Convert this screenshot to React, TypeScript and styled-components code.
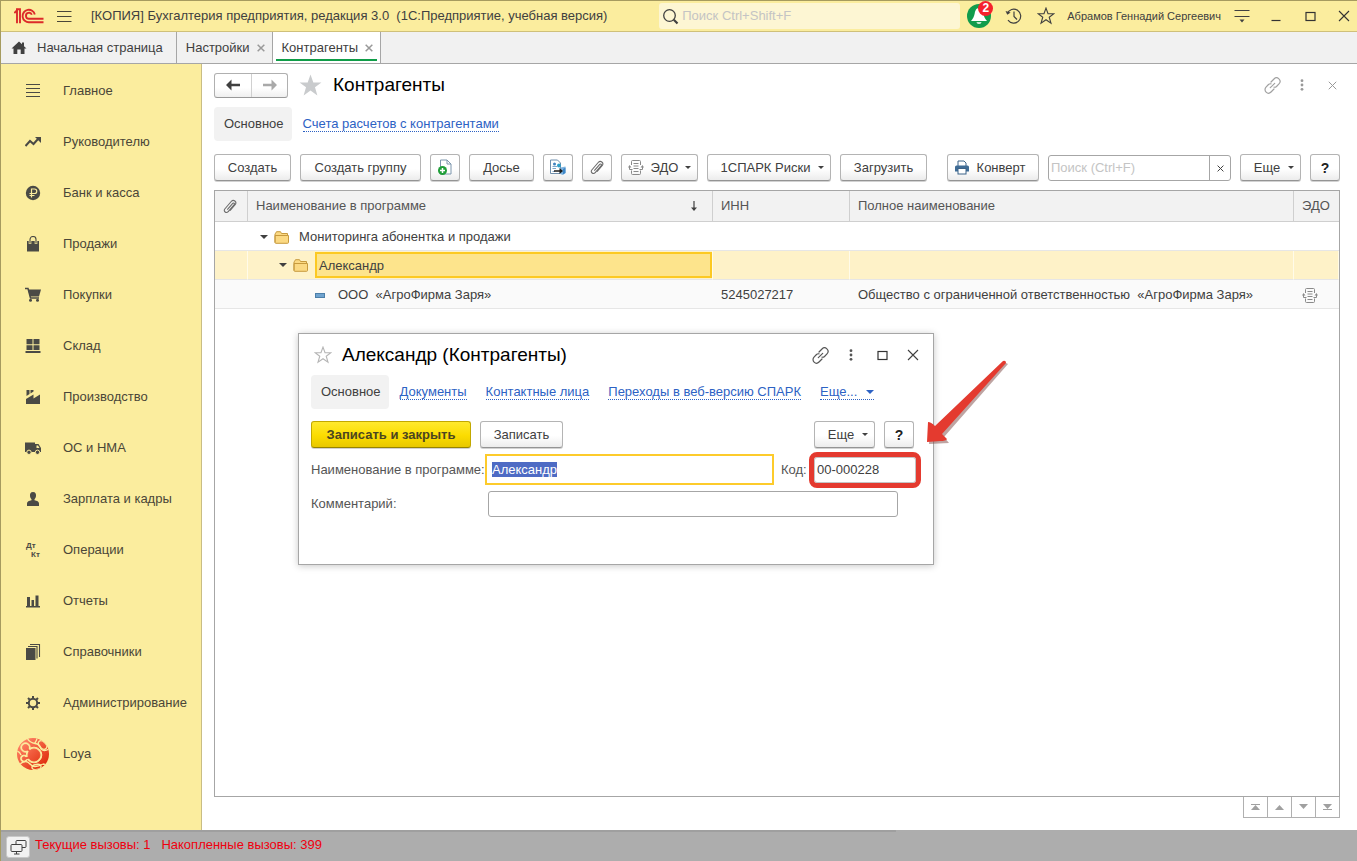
import React, { useEffect, useRef } from 'react';
import styled, { createGlobalStyle, css } from 'styled-components';

const Global = createGlobalStyle`
  *, *::before, *::after { box-sizing: border-box; }
  body { margin: 0; background: #fff; }
  body, button, input { font-family: "Liberation Sans", Arial, sans-serif; font-size: 13px; line-height: 16px; color: #404040; }
  button { padding: 0; margin: 0; border: 0; background: none; cursor: pointer; }
  input { margin: 0; }
  svg { display: block; flex: none; }
  h1, h2 { margin: 0; font-weight: 400; color: #000; }
`;

const Page = styled.div`
  position: relative;
  display: flex;
  flex-direction: column;
  min-height: 100vh;
  border-left: 1px solid #a69b5f;
`;

/* ---------- title bar ---------- */
const TitleBar = styled.header`
  display: flex;
  align-items: center;
  height: 32px;
  padding: 0 0 0 13px;
  background: #fbed9e;
  border-top: 1px solid #a69b5f;
  border-bottom: 1px solid #cfc07a;
`;
const MenuButton = styled.button`
  margin: 0 19px 0 13px;
`;
const WindowTitle = styled.div`
  flex: 1;
  white-space: pre;
`;
const GlobalSearch = styled.label`
  display: flex;
  align-items: center;
  gap: 3px;
  width: 301px;
  height: 26px;
  padding-left: 3px;
  background: #fdf6d3;
  border-radius: 3px;
`;
const PlainInput = styled.input`
  flex: 1;
  min-width: 0;
  border: 0;
  padding: 0;
  outline: 0;
  background: transparent;
  &::placeholder { color: #c4c4c4; opacity: 1; }
`;
const TitleIcons = styled.div`
  display: flex;
  align-items: center;
  gap: 14px;
  margin: 0 12px 0 7px;
`;
const UserName = styled.button`
  font-size: 11px;
`;
const WindowControls = styled.div`
  display: flex;
  align-items: center;
  gap: 8px;
  margin-left: 8px;
  button { display: flex; justify-content: center; width: 26px; }
`;
const BellWrap = styled.button`
  position: relative;
`;
const Badge = styled.span`
  position: absolute;
  top: -3px;
  right: -2px;
  width: 15px;
  height: 15px;
  border-radius: 50%;
  background: #f5222d;
  color: #fff;
  font-size: 12px;
  line-height: 15px;
  font-weight: 700;
`;

/* ---------- tabs ---------- */
const Tabs = styled.nav`
  display: flex;
  height: 32px;
  background: #f1f1f1;
  border-bottom: 1px solid #a6a6a6;
`;
const Tab = styled.button<{ $active?: boolean }>`
  position: relative;
  display: flex;
  align-items: center;
  gap: 7px;
  padding: 0 7px 0 9px;
  border-right: 1px solid #a6a6a6;
  ${p => p.$active && css`
    background: #fff;
    &::after {
      content: "";
      position: absolute;
      left: 3px;
      right: 3px;
      bottom: 2px;
      height: 2px;
      background: #0f9d48;
    }
  `}
`;
const HomeTab = styled(Tab)`
  gap: 10px;
  padding: 0 13px 0 10px;
`;

/* ---------- body ---------- */
const Body = styled.div`
  display: flex;
  flex: 1;
`;
const Sidebar = styled.nav`
  width: 201px;
  padding-top: 1px;
  background: #fbed9e;
  border-right: 1px solid #c9bd84;
`;
const SideItem = styled.a`
  display: grid;
  grid-template-columns: 34px 1fr;
  align-items: center;
  gap: 13px;
  height: 51px;
  padding-left: 15px;
  color: #4a4638;
  text-decoration: none;
`;
const SideIcon = styled.span`
  display: flex;
  justify-content: center;
`;
const Main = styled.main`
  display: flex;
  flex-direction: column;
  flex: 1;
  min-width: 0;
  padding: 8px 17px 12px 12px;
`;
const Heading = styled.div`
  display: flex;
  align-items: center;
  height: 26px;
  gap: 10px;
  h1 { font-size: 19px; line-height: 24px; flex: 1; }
`;
const NavPair = styled.div`
  display: flex;
  height: 25px;
  border: 1px solid #b0b0b0;
  border-bottom-color: #999;
  border-radius: 3px;
  background: linear-gradient(#fff 60%, #efefef);
  button { width: 36px; display: flex; align-items: center; justify-content: center; }
  button + button { border-left: 1px solid #d0d0d0; }
`;
const HeadActions = styled.div<{ $gap: number }>`
  display: flex;
  align-items: center;
  gap: ${p => p.$gap}px;
  button { display: flex; justify-content: center; width: 16px; }
`;
const SectionNav = styled.div`
  display: flex;
  align-items: center;
`;
const CurrentSection = styled.span`
  display: flex;
  align-items: center;
  height: 34px;
  padding: 0 8px 0 10px;
  border-radius: 4px;
  background: #f2f2f2;
`;
const DottedLink = styled.a`
  display: flex;
  align-items: center;
  gap: 9px;
  height: 15px;
  line-height: 16px;
  color: #2d62c4;
  text-decoration: none;
  border-bottom: 1px dotted #2d62c4;
  white-space: nowrap;
`;
const MainSections = styled(SectionNav)`
  gap: 11px;
  margin: 9px 0 13px;
`;

const Btn = styled.button<{ $w: number }>`
  display: flex;
  align-items: center;
  justify-content: center;
  gap: 7px;
  flex: none;
  width: ${p => p.$w}px;
  height: 27px;
  border: 1px solid #b4b4b4;
  border-bottom-color: #949494;
  border-radius: 3px;
  background: linear-gradient(#fff 55%, #ececec);
  box-shadow: 0 1px 0 #d2d2d2;
  white-space: nowrap;
`;
const MenuBtn = styled(Btn)`
  gap: 8px;
  padding-left: 7px;
`;
const IconTextBtn = styled(Btn)`
  padding-right: 7px;
`;
const PrimaryBtn = styled(Btn)`
  background: linear-gradient(#ffe92e, #fbdc00 55%, #e8c800);
  border-color: #c2a800;
  border-bottom-color: #978400;
  font-weight: 700;
  color: #4b4520;
`;
const HelpBtn = styled(Btn)`
  font-weight: 700;
  font-size: 14px;
  color: #222;
`;
const Toolbar = styled.div`
  display: flex;
  gap: 9px;
`;
const Spacer = styled.div`
  flex: 0 0 2px;
`;
const ListSearch = styled.div`
  display: flex;
  flex: 1;
  height: 26px;
  min-width: 120px;
  margin-top: 1px;
  padding-left: 2px;
  border: 1px solid #a6a6a6;
  border-radius: 3px;
  background: #fff;
  button { width: 21px; border-left: 1px solid #a6a6a6; display: flex; align-items: center; justify-content: center; }
`;

/* ---------- list ---------- */
const ListPane = styled.section`
  flex: 1;
  margin-top: 9px;
  border: 1px solid #a6a6a6;
`;
const List = styled.table`
  width: 100%;
  table-layout: fixed;
  border-collapse: separate;
  border-spacing: 0;
`;
const Th = styled.th`
  height: 31px;
  padding: 0 8px;
  background: #f2f2f2;
  border-bottom: 1px solid #cfcfcf;
  border-right: 1px solid #cfcfcf;
  font-weight: 400;
  text-align: left;
  color: #555;
  white-space: nowrap;
  &:last-child { border-right: 0; }
`;
const SortHead = styled.span`
  display: flex;
  align-items: center;
  justify-content: space-between;
  padding-right: 6px;
`;
const Row = styled.tr<{ $kind?: 'selected' | 'alt' }>`
  background: ${p => (p.$kind === 'selected' ? '#fef2c8' : p.$kind === 'alt' ? '#fafafa' : '#fff')};
  td { border-right: ${p => (p.$kind === 'selected' ? '1px solid #fffbe9' : '0')}; }
`;
const Td = styled.td`
  height: 29px;
  padding: 2px 8px 0;
  border-bottom: 1px solid #e6e6e6;
  white-space: pre;
`;
const TreeCell = styled.div<{ $indent: number }>`
  display: flex;
  align-items: center;
  gap: 6px;
  padding-left: ${p => p.$indent}px;
`;
const TreeLabel = styled.span<{ $left: number }>`
  padding-left: ${p => p.$left}px;
`;
const TightTd = styled(Td)`
  padding: 0 0 0 8px;
`;
const ActiveCell = styled.span`
  flex: 1;
  height: 26px;
  padding-left: 2px;
  line-height: 23px;
  border: 2px solid #fcc922;
  background: #fde48c;
`;
const Pager = styled.div`
  display: flex;
  align-self: flex-end;
  border: 1px solid #b0b0b0;
  border-top: 0;
  button { width: 24px; height: 20px; display: flex; align-items: center; justify-content: center; }
  button + button { border-left: 1px solid #b0b0b0; }
  button:first-child { width: 23px; }
`;

/* ---------- status ---------- */
const StatusBar = styled.footer`
  display: flex;
  gap: 5px;
  height: 31px;
  padding: 6px 5px 0;
  background: linear-gradient(#9f9f9f, #9f9f9f) 0 0 / 66% 2px no-repeat #adadad;
  color: #f0000f;
  white-space: pre;
  line-height: 18px;
`;
const WindowsBtn = styled.button`
  display: flex;
  align-items: center;
  justify-content: center;
  width: 24px;
  height: 22px;
  border: 1px solid #c8c8c8;
  border-radius: 3px;
  background: #f2f2f2;
`;

/* ---------- dialog ---------- */
const Dialog = styled.section`
  position: absolute;
  left: 297px;
  top: 333px;
  width: 636px;
  height: 232px;
  padding: 8px 12px;
  border: 1px solid #a6a6a6;
  background: #fff;
  box-shadow: 0 1px 7px rgba(0, 0, 0, 0.22);
`;
const DialogHead = styled.div`
  display: flex;
  align-items: center;
  gap: 10px;
  height: 26px;
  padding-left: 3px;
  h2 { flex: 1; font-size: 19px; line-height: 24px; }
`;
const DialogSections = styled(SectionNav)`
  gap: 19px;
  margin: 7px 0 12px;
  ${CurrentSection} { margin-right: -8px; }
`;
const Commands = styled.div`
  display: flex;
  gap: 9px;
  padding-right: 7px;
`;
const Grow = styled.div`
  flex: 1;
`;
const Fields = styled.div`
  display: grid;
  grid-template-columns: 171px 1fr;
  align-items: center;
  row-gap: 6px;
  margin-top: 6px;
  label { color: #555; white-space: nowrap; }
`;
const FieldLine = styled.div`
  display: flex;
  align-items: center;
`;
const NameInput = styled.input`
  width: 289px;
  height: 31px;
  margin-left: 3px;
  margin-right: 7px;
  padding: 0 5px;
  border: 2px solid #fdcb2b;
  outline: 0;
  &::selection { background: #4e6bc4; color: #fff; }
`;
const CodeInput = styled.input`
  width: 102px;
  height: 26px;
  padding: 0 2px;
  border: 1px solid #c4c4c4;
  border-radius: 3px;
  outline: 5px solid #e43a2f;
`;
const CodeLabel = styled.label`
  width: 33px;
`;
const CommentInput = styled.input`
  width: 410px;
  height: 26px;
  margin-left: 6px;
  border: 1px solid #a6a6a6;
  border-radius: 3px;
`;
const Pointer = styled.svg`
  position: absolute;
  left: 919px;
  top: 353px;
  pointer-events: none;
`;

/* ---------- drawings ---------- */
const Logo = () => (
  <svg width="30" height="16" viewBox="0 0 30 16" fill="none" stroke="#dc2a2a" strokeWidth="1.9">
    <path d="M.3 5 L3 2.300 V15.200 M2 1.200 H6 V15.200" />
    <path d="M20.800 6.500 A6.200 6.200 0 1 0 15.200 14.200 H29.500" />
    <path d="M17.800 6.800 A3 3 0 1 0 15.200 10.800 H29.500" />
  </svg>
);
const Burger = () => (
  <svg width="15" height="13" viewBox="0 0 15 13" stroke="#4a4638" strokeWidth="1.2"><path d="M0 1.500H14.500M0 6.500H14.500M0 11.500H14.500" /></svg>
);
const Magnifier = () => (
  <svg width="17" height="17" viewBox="0 0 17 17" fill="none" stroke="#404040"><circle cx="7.5" cy="7.5" r="5.800" strokeWidth="1.300" /><path d="M11.800 11.800L15.500 15.500" strokeWidth="2.200" /></svg>
);
const Bell = () => (
  <svg width="24" height="24" viewBox="0 0 24 24"><circle cx="12" cy="12" r="12" fill="#119c4c" /><path d="M12 4c-3 0-3.800 3-4.300 5.500C7.200 12.500 6 14.500 4 17h16c-2-2.500-3.200-4.500-3.700-7.500C15.800 7 15 4 12 4zM9.500 18.300h5c-.500 2-4.500 2-5 0z" fill="#fff" /></svg>
);
const HistoryIcon = () => (
  <svg width="18" height="18" viewBox="0 0 18 18" fill="none" stroke="#404040" strokeWidth="1.200"><path d="M2.200 6.500A7 7 0 1 1 3 13.200M9 4.500V9.500L12 12.500" /><path d="M.5 4L2.400 7.800L5.600 5.500z" fill="#404040" stroke="none" /></svg>
);
const Star = ({ size, fill = 'none', stroke = 'none' }: { size: number; fill?: string; stroke?: string }) => (
  <svg width={size} height={size} viewBox="0 0 24 24" fill={fill} stroke={stroke} strokeWidth="1.500"><path d="M12 1.500L14.700 9H22.500L16.300 13.700L18.600 21.500L12 16.900L5.400 21.500L7.700 13.700L1.500 9H9.300z" /></svg>
);
const Options = () => (
  <svg width="16" height="14" viewBox="0 0 16 14"><path d="M.5 1.500H15.500M.5 7.500H15.500" stroke="#404040" strokeWidth="1.100" /><path d="M5.500 10.500H10.500L8 13.500z" fill="#404040" /></svg>
);
const Minimize = () => <svg width="10" height="12" viewBox="0 0 10 12"><path d="M.5 10.500H9.500" stroke="#333" strokeWidth="1.200" /></svg>;
const Maximize = () => <svg width="11" height="11" viewBox="0 0 11 11"><rect x="1" y="1.500" width="9" height="8" fill="none" stroke="#333" strokeWidth="1.200" /></svg>;
const Cross = ({ size, color, width = 1.1 }: { size: number; color: string; width?: number }) => (
  <svg width={size} height={size} viewBox="0 0 12 12"><path d="M1 1L11 11M11 1L1 11" stroke={color} strokeWidth={width * 12 / size} /></svg>
);
const Home = () => (
  <svg width="16" height="14" viewBox="0 0 16 14" fill="#404040"><path d="M8 .5L.5 7.500H2.500V13H6.300V8.500H9.700V13H13.500V7.500H15.500L13 5.200V1.500H11V3.300z" /></svg>
);
const Arrow = ({ flip, color }: { flip?: boolean; color: string }) => (
  <svg width="16" height="12" viewBox="0 0 16 12"><path d={flip ? 'M15 6L9.500 .5V4.700H1V7.300H9.500V11.500z' : 'M1 6L6.500 .5V4.700H15V7.300H6.500V11.500z'} fill={color} /></svg>
);
const LinkIcon = ({ color }: { color: string }) => (
  <svg width="17" height="17" viewBox="0 0 17 17" fill="none" stroke={color} strokeWidth="1.200" strokeLinecap="round">
    <path d="M7 5L10 2A3.200 3.200 0 0 1 15 6.800L12.500 9.500Q11.500 10.500 10 10.200" />
    <path d="M10 12L7 15A3.200 3.200 0 0 1 2 10.200L4.500 7.500Q5.500 6.500 7 6.800" />
    <path d="M6.300 10.700L10.700 6.300" />
  </svg>
);
const Dots = ({ color }: { color: string }) => (
  <svg width="4" height="12" viewBox="0 0 4 12" fill={color}><circle cx="2" cy="1.700" r="1.400" /><circle cx="2" cy="6" r="1.400" /><circle cx="2" cy="10.300" r="1.400" /></svg>
);
const Caret = ({ color = '#404040', size = 6 }: { color?: string; size?: number }) => (
  <svg width={size} height={size / 2} viewBox="0 0 8 4"><path d="M0 0H8L4 4z" fill={color} /></svg>
);
const Clip = () => (
  <svg width="14" height="15" viewBox="0 0 14 15" fill="none" stroke="#6c6c6c" strokeWidth="1.100"><path d="M4.300 10.600L9.500 4.600C10.800 3.200 12 4.600 11 5.900L5.200 12.600C3.300 14.700 0 12.400 1.800 10L8.200 2.500C10.500 0 14.200 2.600 12.300 5.400L7 11.600" /></svg>
);
const Folder = () => (
  <svg width="16" height="13" viewBox="0 0 16 13" fill="#fbd983" stroke="#c79a3e"><path d="M1 11.500V3Q1 2.500 1.500 2.500L2.500 .7H6.500L7.500 2.500H13.500V4.500M1 4.500H14.500V11.500Q14.500 12.300 13.500 12.300H2Q1 12.300 1 11.500V4.500z" /></svg>
);
const DocAdd = () => (
  <svg width="16" height="17" viewBox="0 0 16 17"><path d="M3.500 1H10L14 5V15H3.500z" fill="#fff" stroke="#7d96ad" /><path d="M10 1V5H14" fill="none" stroke="#7d96ad" /><circle cx="5.500" cy="11.500" r="4.500" fill="#1f9e38" /><path d="M5.500 9V14M3 11.500H8" stroke="#fff" strokeWidth="1.500" /></svg>
);
const DocSend = () => (
  <svg width="18" height="17" viewBox="0 0 18 17"><path d="M1.500 1H8.500L11.500 4V14.500H1.500z" fill="#fff" stroke="#6f8fac" /><path d="M3.500 7.500H8M3.500 9.500H7M3.500 12.500H6" stroke="#7da7cb" /><circle cx="5.500" cy="5" r="1.500" fill="#3f82bf" /><circle cx="10" cy="6.500" r="2" fill="#2f9fc9" /><path d="M11.500 8.500L16.500 7.500V14L13.500 16L10.500 14.500z" fill="#7fb4e0" /><path d="M14 10L16.500 8.500V14L14 15.500z" fill="#3d87c9" /><path d="M5 11.300H10.500V9L14 12L10.500 15V12.700H5z" fill="#1c1c1c" /></svg>
);
const EdoIcon = () => (
  <svg width="16" height="15" viewBox="0 0 16 15" fill="none" stroke="#8a8a8a"><path d="M3.500 5V1.500Q3.500 .5 4.500 .5H11.500Q12.500 .5 12.500 1.500V5M3.500 10.500V13.500Q3.500 14.500 4.500 14.500H11.500Q12.500 14.500 12.500 13.500V10.500M5.500 3.500H10.500M5.500 6H10.500M5.500 8.500H10.500M5.500 11.500H10.500" /><path d="M4.500 9.500H1.500V6.500M11.500 9.500H14.500V6.500" /><path d="M0 7.500L1.500 5L3.500 7.500zM12.500 7.500L14.500 5L16 7.500z" fill="#8a8a8a" stroke="none" /></svg>
);
const Printer = () => (
  <svg width="16" height="15" viewBox="0 0 16 15"><path d="M4 6V1H10L12 3V6" fill="#fff" stroke="#3a6288" /><path d="M1 7Q1 5.500 2.500 5.500H13.500Q15 5.500 15 7V11.500H1z" fill="#3f6c96" /><rect x="4" y="8.500" width="8" height="5.500" fill="#fff" stroke="#3a6288" /></svg>
);
const SortArrow = () => (
  <svg width="8" height="12" viewBox="0 0 8 12"><path d="M4 1V10" stroke="#404040" strokeWidth="1.200" /><path d="M1 7.500H7L4 11z" fill="#404040" /></svg>
);
const ItemMark = () => (
  <svg width="10" height="5" viewBox="0 0 10 5"><rect x=".5" y=".5" width="9" height="4" fill="#6fa3cf" stroke="#4c7fa9" /></svg>
);
const PagerIcon = ({ up, end }: { up?: boolean; end?: boolean }) => (
  <svg width="11" height="8" viewBox="0 0 11 8"><path d={up ? 'M1 7L5.500 2L10 7z' : 'M1 1L5.500 6L10 1z'} fill="#a0a0a0" />{end && <path d={up ? 'M1 1.500H10' : 'M1 6.500H10'} stroke="#a0a0a0" />}</svg>
);
const Screens = () => (
  <svg width="17" height="16" viewBox="0 0 17 16" fill="#f2f2f2" stroke="#404040"><rect x="6" y="1.500" width="10" height="7" rx="1" /><rect x="1" y="5.500" width="11" height="7" rx="1" /><path d="M6.500 12.500V15M4 15H9.500" /></svg>
);

const K = '#4a4a45';
const PAPER = '#fbed9e';
const sideIcons: Record<string, React.ReactNode> = {
  main: <path d="M1 1.500H15M1 5.500H15M1 9.500H15M1 13.500H15" stroke={K} />,
  chart: <><path d="M.5 12L5 7L8.500 10L13 5" fill="none" stroke={K} strokeWidth="2" /><path d="M10 3H16V9z" fill={K} /></>,
  ruble: <><circle cx="8" cy="8" r="7.200" fill={K} /><path d="M6.500 12.500V4H9.500A2.200 2.200 0 0 1 9.500 8.500H4.500M4.500 10.500H9.500" fill="none" stroke={PAPER} strokeWidth="1.200" /></>,
  bag: <><path d="M2 5H14V15.500H2z" fill={K} /><path d="M5 8V3.500A2.500 2.500 0 0 1 11 3.500V8" fill="none" stroke={PAPER} strokeWidth="2.600" /><path d="M5 7.500V3.500A2.500 2.500 0 0 1 11 3.500V7.500" fill="none" stroke={K} strokeWidth="1.100" /></>,
  cart: <><path d="M0 1.500H3L5.500 11H14" fill="none" stroke={K} strokeWidth="1.500" /><path d="M3 2.500H16L14 9.500H5z" fill={K} /><circle cx="5.500" cy="13.300" r="1.500" fill={K} /><circle cx="12.500" cy="13.300" r="1.500" fill={K} /></>,
  store: <path d="M1.500 1H7.500V6.300H1.500zM8.500 1H14.500V6.300H8.500zM1.500 7.300H7.500V12H1.500zM8.500 7.300H14.500V12H8.500zM.5 13H15.500V15H.5z" fill={K} />,
  factory: <path d="M1 15V10L8.500 5.500V9.500L15 5.500V15zM1.500 1H4.500V5L1.500 7zM5.500 1H8.500V2.500L5.500 4.500z" fill={K} />,
  truck: <><path d="M0 2.500H10V4H13.500L16 8V12H0z" fill={K} /><path d="M11.500 5.500H13L14.500 8H11.500z" fill={PAPER} /><circle cx="4" cy="12.300" r="2.200" fill={K} stroke={PAPER} /><circle cx="12.500" cy="12.300" r="2.200" fill={K} stroke={PAPER} /></>,
  person: <path d="M8 1C10.500 1 11.200 3 11 5C10.800 6.800 10 7.500 9.500 8.300V9.300C12 10 14 10.500 14 12.500V15H2V12.500C2 10.500 4 10 6.500 9.300V8.300C6 7.500 5.200 6.800 5 5C4.800 3 5.500 1 8 1z" fill={K} />,
  ops: <g fill={K} fontFamily="Liberation Sans, Arial, sans-serif" fontWeight="700" fontSize="8"><text x="1" y="6">Дт</text><text x="6" y="15">Кт</text></g>,
  bars: <path d="M1 13H15V14.500H1zM2 4H5V13H2zM6.500 7H9V13H6.500zM10.500 2.500H13.500V13H10.500z" fill={K} />,
  books: <><path d="M1 4H10.500V16H1z" fill={K} /><path d="M3 2.500H12V14.500M5 .5H14.500V13" fill="none" stroke={K} strokeWidth="1.100" /></>,
  gear: <><circle cx="8" cy="8" r="4.200" fill="none" stroke={K} strokeWidth="2" /><path d="M8 1V3.500M8 12.500V15M1 8H3.500M12.500 8H15M3 3L4.800 4.800M11.200 11.200L13 13M13 3L11.200 4.800M3 13L4.800 11.200" stroke={K} strokeWidth="2" /></>,
};
const SideGlyph = ({ name }: { name: string }) => <svg width="16" height="16" viewBox="0 0 16 16">{sideIcons[name]}</svg>;
const LoyaLogo = () => (
  <svg width="32" height="32" viewBox="0 0 32 32">
    <defs>
      <linearGradient id="loya" gradientUnits="userSpaceOnUse" x1="4" y1="4" x2="27" y2="28"><stop offset="0" stopColor="#ff8265" /><stop offset="1" stopColor="#e02f0e" /></linearGradient>
      <clipPath id="ball"><circle cx="16" cy="16" r="16" /></clipPath>
    </defs>
    <g clipPath="url(#ball)">
      <rect width="32" height="32" fill="url(#loya)" />
      <g fill="none" stroke={PAPER} strokeWidth="1.400">
        <path d="M10 0Q13 5 18 5.500T24 11Q27 14 32 11M0 13Q3 14 4 17M3 26Q9 21 13 26T26 26M26 26Q29 26 30 29M18 5Q20 2 20 0" />
        <ellipse cx="25.500" cy="7" rx="3.300" ry="5" transform="rotate(-45 25.500 7)" />
        <ellipse cx="19.500" cy="29" rx="4.500" ry="2.600" transform="rotate(-10 19.500 29)" />
      </g>
      <g fill={PAPER} stroke={PAPER}>
        <circle cx="17" cy="17" r="7.800" /><circle cx="8.500" cy="9.500" r="4.700" /><circle cx="7" cy="20.500" r="3.400" />
      </g>
      <g fill="url(#loya)" stroke="url(#loya)">
        <circle cx="17" cy="17" r="6" /><circle cx="8.500" cy="9.500" r="3" /><circle cx="7" cy="20.500" r="1.700" />
        <path d="M9 10L15 15M8 20.500L14 19" strokeWidth="2" />
      </g>
    </g>
  </svg>
);

const sections: [string, string][] = [
  ['main', 'Главное'], ['chart', 'Руководителю'], ['ruble', 'Банк и касса'], ['bag', 'Продажи'],
  ['cart', 'Покупки'], ['store', 'Склад'], ['factory', 'Производство'], ['truck', 'ОС и НМА'],
  ['person', 'Зарплата и кадры'], ['ops', 'Операции'], ['bars', 'Отчеты'], ['books', 'Справочники'],
  ['gear', 'Администрирование'],
];

export default function App() {
  const nameRef = useRef<HTMLInputElement>(null);
  useEffect(() => {
    nameRef.current?.focus();
    nameRef.current?.select();
  }, []);

  return (
    <Page>
      <Global />
      <TitleBar>
        <Logo />
        <MenuButton aria-label="Меню"><Burger /></MenuButton>
        <WindowTitle>[КОПИЯ] Бухгалтерия предприятия, редакция 3.0  (1С:Предприятие, учебная версия)</WindowTitle>
        <GlobalSearch>
          <Magnifier />
          <PlainInput aria-label="Поиск" placeholder="Поиск Ctrl+Shift+F" />
        </GlobalSearch>
        <TitleIcons>
          <BellWrap aria-label="Уведомления"><Bell /><Badge>2</Badge></BellWrap>
          <button aria-label="История"><HistoryIcon /></button>
          <button aria-label="Избранное"><Star size={18} stroke="#404040" /></button>
        </TitleIcons>
        <UserName>Абрамов Геннадий Сергеевич</UserName>
        <WindowControls>
          <button aria-label="Настройки"><Options /></button>
          <button aria-label="Свернуть"><Minimize /></button>
          <button aria-label="Развернуть"><Maximize /></button>
          <button aria-label="Закрыть"><Cross size={12} color="#333" /></button>
        </WindowControls>
      </TitleBar>

      <Tabs>
        <HomeTab><Home />Начальная страница</HomeTab>
        <Tab>Настройки<Cross size={8} color="#999" width={1.5} /></Tab>
        <Tab $active>Контрагенты<Cross size={8} color="#999" width={1.5} /></Tab>
      </Tabs>

      <Body>
        <Sidebar>
          {sections.map(([icon, label]) => (
            <SideItem href="#" key={label}><SideIcon><SideGlyph name={icon} /></SideIcon>{label}</SideItem>
          ))}
          <SideItem href="#"><SideIcon><LoyaLogo /></SideIcon>Loya</SideItem>
        </Sidebar>

        <Main>
          <Heading>
            <NavPair>
              <button aria-label="Назад"><Arrow color="#404040" /></button>
              <button aria-label="Вперед"><Arrow flip color="#a9a9a9" /></button>
            </NavPair>
            <Star size={25} fill="#c9cbcd" />
            <h1>Контрагенты</h1>
            <HeadActions $gap={14}>
              <button aria-label="Ссылка"><LinkIcon color="#a0a0a0" /></button>
              <button aria-label="Еще"><Dots color="#999" /></button>
              <button aria-label="Закрыть"><Cross size={9} color="#999" width={1} /></button>
            </HeadActions>
          </Heading>

          <MainSections>
            <CurrentSection>Основное</CurrentSection>
            <DottedLink href="#">Счета расчетов с контрагентами</DottedLink>
          </MainSections>

          <Toolbar>
            <Btn $w={77}>Создать</Btn>
            <Btn $w={121}>Создать группу</Btn>
            <Btn $w={30} aria-label="Добавить"><DocAdd /></Btn>
            <Btn $w={65}>Досье</Btn>
            <Btn $w={30} aria-label="Отправить"><DocSend /></Btn>
            <Btn $w={30} aria-label="Файлы"><Clip /></Btn>
            <Btn $w={77}><EdoIcon />ЭДО<Caret /></Btn>
            <MenuBtn $w={124}>1СПАРК Риски<Caret /></MenuBtn>
            <Btn $w={87}>Загрузить</Btn>
            <Spacer />
            <IconTextBtn $w={92}><Printer />Конверт</IconTextBtn>
            <ListSearch>
              <PlainInput aria-label="Поиск в списке" placeholder="Поиск (Ctrl+F)" />
              <button aria-label="Очистить"><Cross size={7} color="#404040" width={1} /></button>
            </ListSearch>
            <MenuBtn $w={61}>Еще<Caret /></MenuBtn>
            <HelpBtn $w={30}>?</HelpBtn>
          </Toolbar>

          <ListPane>
            <List>
              <colgroup>
                <col style={{ width: 33 }} /><col style={{ width: 465 }} /><col style={{ width: 137 }} /><col /><col style={{ width: 45 }} />
              </colgroup>
              <thead>
                <tr>
                  <Th aria-label="Файлы"><Clip /></Th>
                  <Th><SortHead>Наименование в программе<SortArrow /></SortHead></Th>
                  <Th>ИНН</Th>
                  <Th>Полное наименование</Th>
                  <Th>ЭДО</Th>
                </tr>
              </thead>
              <tbody>
                <Row>
                  <Td />
                  <Td><TreeCell $indent={4}><Caret size={8} /><Folder /><TreeLabel $left={3}>Мониторинга абонентка и продажи</TreeLabel></TreeCell></Td>
                  <Td /><Td /><Td />
                </Row>
                <Row $kind="selected">
                  <Td />
                  <TightTd><TreeCell $indent={23}><Caret size={8} /><Folder /><ActiveCell>Александр</ActiveCell></TreeCell></TightTd>
                  <Td /><Td /><Td />
                </Row>
                <Row $kind="alt">
                  <Td />
                  <Td><TreeCell $indent={59}><ItemMark /><TreeLabel $left={7}>ООО  «АгроФирма Заря»</TreeLabel></TreeCell></Td>
                  <Td>5245027217</Td>
                  <Td>Общество с ограниченной ответственностью  «АгроФирма Заря»</Td>
                  <Td><EdoIcon /></Td>
                </Row>
              </tbody>
            </List>
          </ListPane>
          <Pager>
            <button aria-label="В начало"><PagerIcon up end /></button>
            <button aria-label="Вверх"><PagerIcon up /></button>
            <button aria-label="Вниз"><PagerIcon /></button>
            <button aria-label="В конец"><PagerIcon end /></button>
          </Pager>
        </Main>
      </Body>

      <StatusBar>
        <WindowsBtn aria-label="Окна"><Screens /></WindowsBtn>
        <span>Текущие вызовы: 1   Накопленные вызовы: 399</span>
      </StatusBar>

      <Dialog role="dialog" aria-labelledby="dialog-title">
        <DialogHead>
          <Star size={18} stroke="#b5b5b5" />
          <h2 id="dialog-title">Александр (Контрагенты)</h2>
          <HeadActions $gap={15}>
            <button aria-label="Ссылка"><LinkIcon color="#555" /></button>
            <button aria-label="Еще"><Dots color="#555" /></button>
            <button aria-label="Развернуть"><Maximize /></button>
            <button aria-label="Закрыть"><Cross size={12} color="#404040" /></button>
          </HeadActions>
        </DialogHead>
        <DialogSections>
          <CurrentSection>Основное</CurrentSection>
          <DottedLink href="#">Документы</DottedLink>
          <DottedLink href="#">Контактные лица</DottedLink>
          <DottedLink href="#">Переходы в веб-версию СПАРК</DottedLink>
          <DottedLink href="#">Еще...<Caret size={8} color="#2d62c4" /></DottedLink>
        </DialogSections>
        <Commands>
          <PrimaryBtn $w={160}>Записать и закрыть</PrimaryBtn>
          <Btn $w={83}>Записать</Btn>
          <Grow />
          <MenuBtn $w={61}>Еще<Caret /></MenuBtn>
          <HelpBtn $w={30}>?</HelpBtn>
        </Commands>
        <Fields>
          <label htmlFor="name">Наименование в программе:</label>
          <FieldLine>
            <NameInput id="name" ref={nameRef} defaultValue="Александр" />
            <CodeLabel htmlFor="code">Код:</CodeLabel>
            <CodeInput id="code" defaultValue="00-000228" />
          </FieldLine>
          <label htmlFor="comment">Комментарий:</label>
          <CommentInput id="comment" />
        </Fields>
      </Dialog>

      <Pointer width="96" height="98" viewBox="0 0 96 98">
        <path d="M9 91L10 72L17 76L84 9L88 11L24 84L29 90z" fill="#7d4a46" opacity=".5" />
        <path d="M7 89L8 69Q11 69 15 73L83 8Q86 7 86 10L22 81L27 86Q26 88 20 88z" fill="#e43a2f" />
      </Pointer>
    </Page>
  );
}
